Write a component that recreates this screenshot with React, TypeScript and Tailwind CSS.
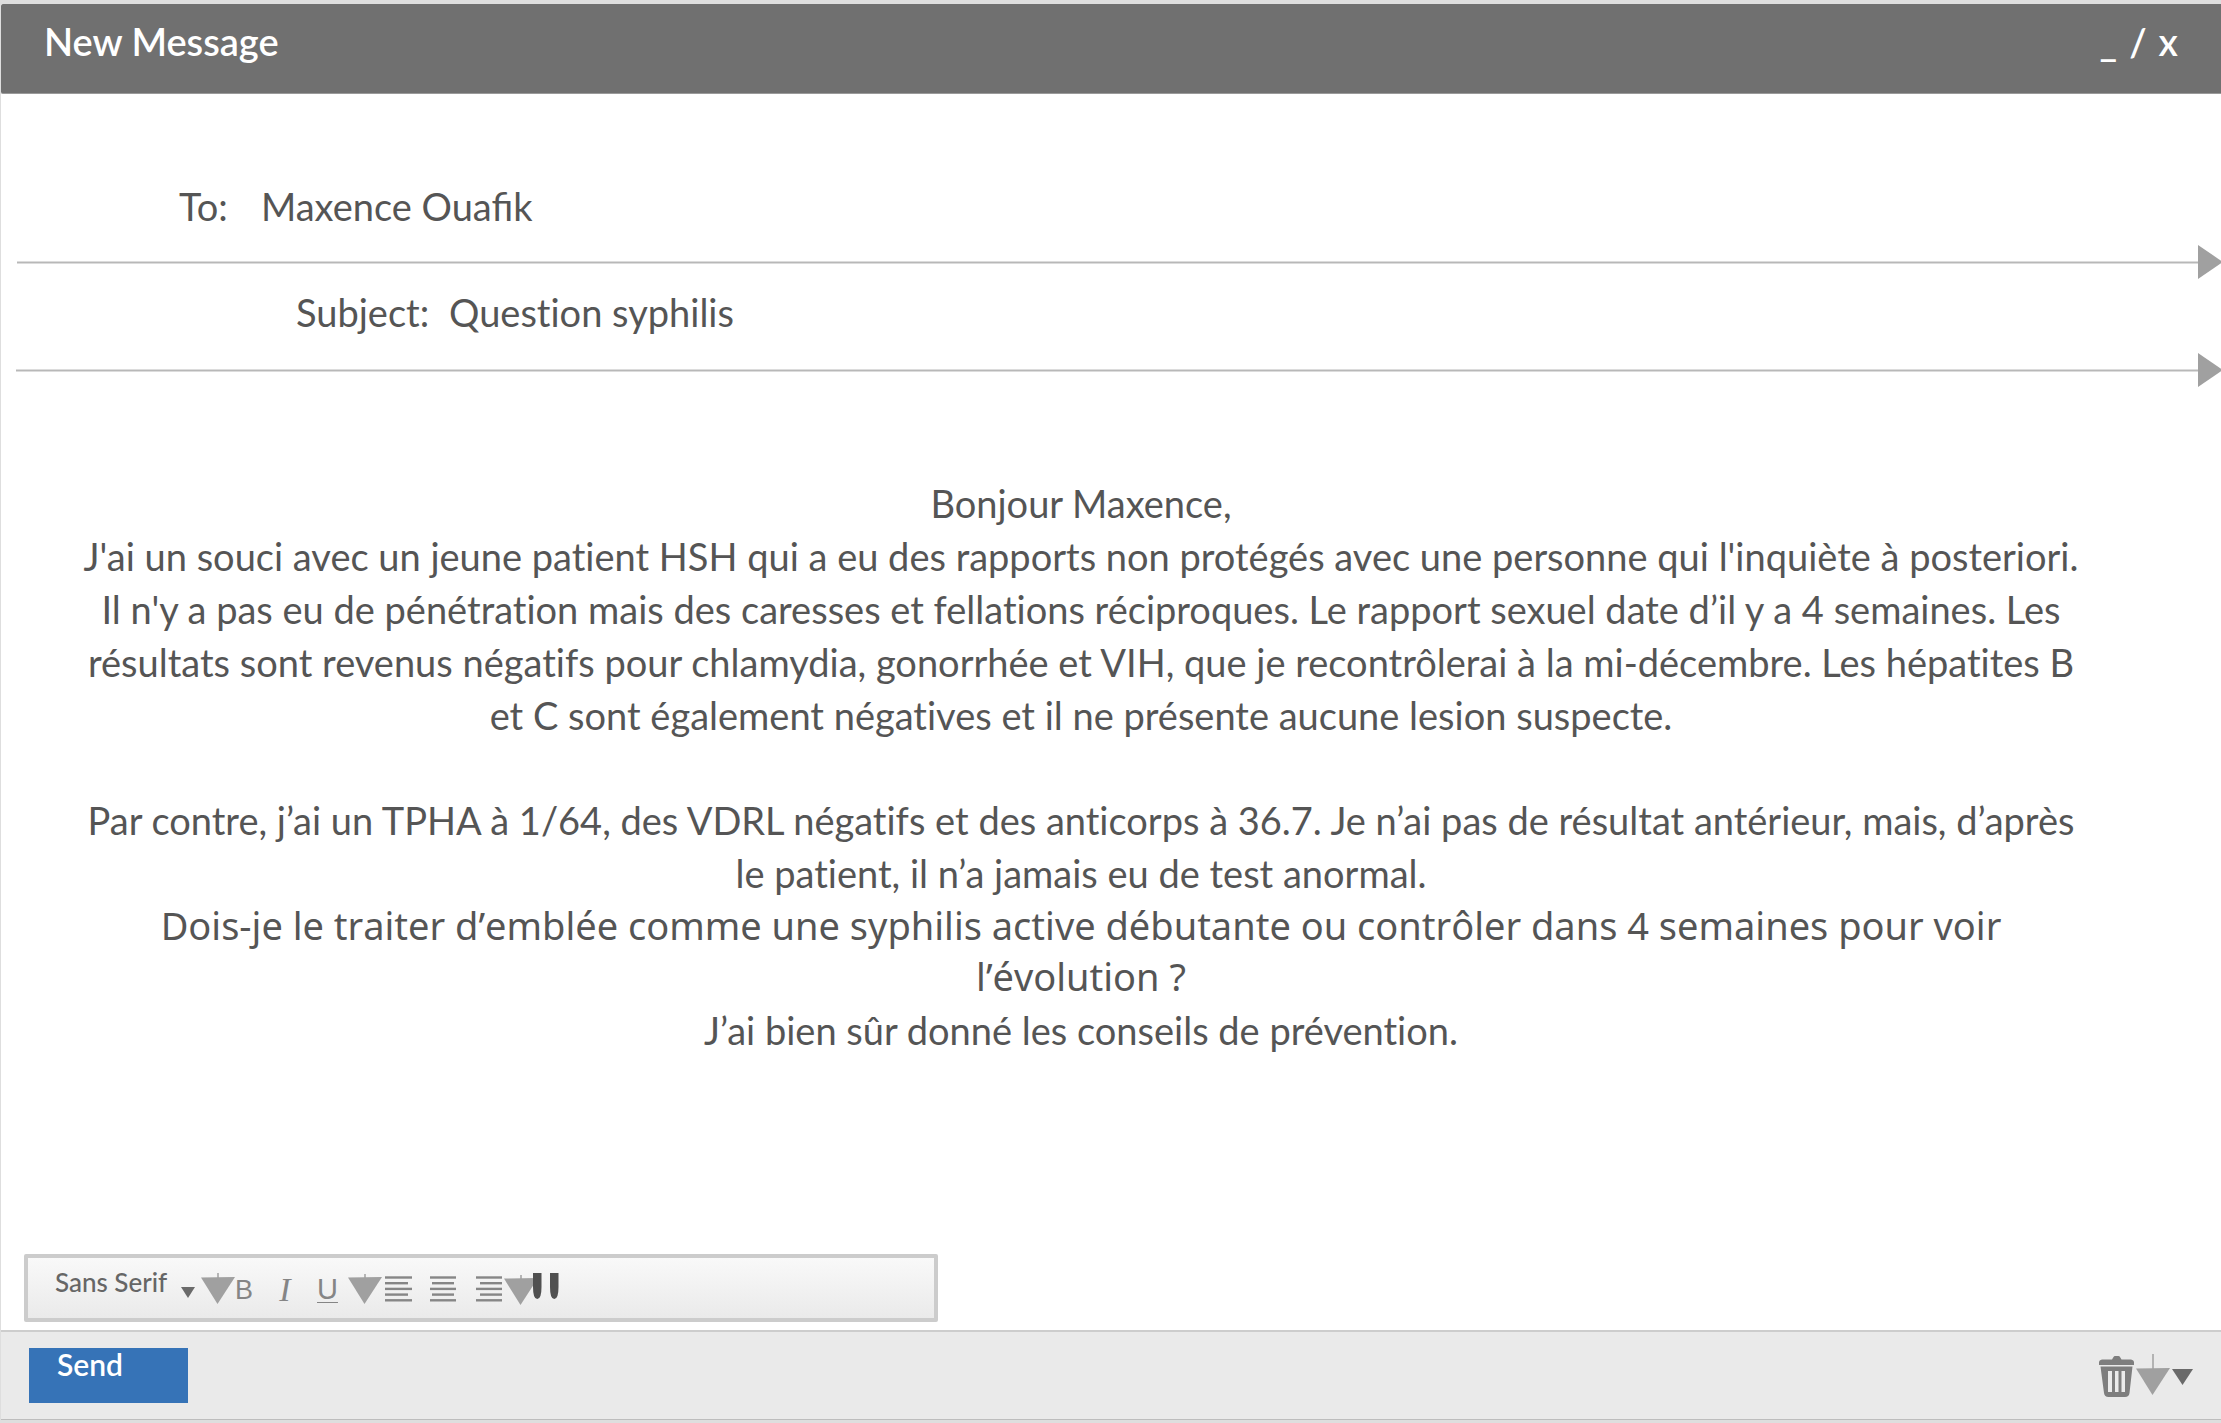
import type { ReactNode } from "react";

function DownArrow({ tick }: { tick: number }) {
  return (
    <svg width="34" height="42" viewBox="0 0 34 42" className="shrink-0" aria-hidden="true">
      <path d={`M17 ${14 - tick}V16`} stroke="#a0a0a0" strokeWidth="1.5" />
      <path d="M0 14.5L34 14L16.5 41Z" fill="#a0a0a0" />
    </svg>
  );
}

function Caret({ className }: { className: string }) {
  return (
    <svg viewBox="0 0 20 15" className={className} preserveAspectRatio="none" aria-hidden="true">
      <path d="M0 0H20L10 15Z" fill="#6a6a6a" />
    </svg>
  );
}

function AlignIcon({ rows }: { rows: number[][] }) {
  return (
    <svg width="27" height="26" viewBox="0 0 27 26" aria-hidden="true">
      {rows.map(([x1, x2], i) => (
        <path key={i} d={`M${x1} ${1.5 + i * 5.7}H${x2}`} stroke="#868686" strokeWidth="2.4" />
      ))}
    </svg>
  );
}

function TrashIcon() {
  return (
    <svg width="35" height="41" viewBox="0 0 35 41" aria-hidden="true">
      <path
        d="M0 9V6.500Q0 4 3 3.500H13L14.500 1Q15 0 16 0H19.500Q20.500 0 21 1L22.500 3.500H32Q35 4 35 6.500V9Z"
        fill="#7e7e7e"
      />
      <path d="M1.500 10.500H33.500L30.500 37Q30 41 26 41H9.500Q5.500 41 5 37Z" fill="#7e7e7e" />
      <path d="M9 15H13V36H9ZM16 15H19.500V36H16ZM22.500 15H26V36H22.500Z" fill="#ebebeb" />
    </svg>
  );
}

function Divider({ className }: { className: string }) {
  return (
    <div className={`flex h-[34px] items-center ${className}`}>
      <div className="h-[3px] flex-1 border-y border-[#dcdcdc] bg-[#b8b8b8]" />
      <svg width="23" height="34" viewBox="0 0 23 34" aria-hidden="true">
        <path d="M0 0L25 17L0 34Z" fill="#a0a0a0" />
      </svg>
    </div>
  );
}

function ToolButton({ label, className, children }: { label: string; className: string; children: ReactNode }) {
  return (
    <button type="button" aria-label={label} className={`flex shrink-0 items-center justify-center ${className}`}>
      {children}
    </button>
  );
}

export default function App() {
  return (
    <div className="flex min-h-screen flex-col border-t-4 border-b-3 border-l border-[#dedede] bg-white font-['Lato',sans-serif] text-[38px] text-[#555555]">
      <header className="flex h-[90px] items-start justify-between rounded-l-xs border-b border-[#9a9a9a] bg-[#707070] pt-[13px] pr-[43px] pl-[43px] leading-[48px] text-white">
        <h1 className="font-semibold">New Message</h1>
        <div className="flex gap-3 font-semibold">
          <button type="button" aria-label="Minimize">_</button>
          <button type="button" aria-label="Expand">/</button>
          <button type="button" aria-label="Close">x</button>
        </div>
      </header>

      <form className="flex flex-1 flex-col" onSubmit={(e) => e.preventDefault()}>
        <div className="mt-[86px] flex items-center pl-[178px] leading-[52px]">
          <label htmlFor="to" className="w-[82px]">To:</label>
          <input id="to" defaultValue="Maxence Ouafik" className="h-[52px] flex-1 bg-transparent outline-none" />
        </div>
        <Divider className="mt-[13px] ml-4" />
        <div className="mt-[7px] flex items-center pl-[295px] leading-[52px] [font-variant-ligatures:none]">
          <label htmlFor="subject" className="w-[153px]">Subject:</label>
          <input id="subject" defaultValue="Question syphilis" className="h-[52px] flex-1 bg-transparent outline-none [font-variant-ligatures:none]" />
        </div>
        <Divider className="mt-[15px] ml-[15px]" />

        <div
          role="textbox"
          aria-label="Message body"
          aria-multiline="true"
          className="mt-[90px] mr-[134px] ml-[74px] text-center leading-[53px] [font-variant-ligatures:none] [text-rendering:optimizeSpeed]"
        >
          <p>Bonjour Maxence,</p>
          <p>
            J'ai un souci avec un jeune patient HSH qui a eu des rapports non protégés avec une personne qui l'inquiète à
            posteriori. Il n'y a pas eu de pénétration mais des caresses et fellations réciproques. Le rapport sexuel
            date d’il y a 4 semaines. Les résultats sont revenus négatifs pour chlamydia, gonorrhée et VIH, que je
            recontrôlerai à la mi-décembre. Les hépatites B et C sont également négatives et il ne présente aucune lesion
            suspecte.
          </p>
          <p className="mt-[52px]">
            Par contre, j’ai un TPHA à 1/64, des VDRL négatifs et des anticorps à 36.7. Je n’ai pas de résultat
            antérieur, mais, d’après le patient, il n’a jamais eu de test anormal.
          </p>
          <p className="font-['Noto_Sans',sans-serif] leading-[51px] [font-kerning:none]">
            Dois-je le traiter d’emblée comme une syphilis active débutante ou contrôler dans 4 semaines pour voir
            <br />
            l’évolution ?
          </p>
          <p className="mt-[2px]">J’ai bien sûr donné les conseils de prévention.</p>
        </div>

        <div className="mt-auto mb-2 ml-[23px] flex h-[68px] w-[914px] items-center rounded-xs border-4 border-[#cccccc] bg-linear-to-b from-[#f9f9f9] to-[#eaeaea] text-[#858585]">
          <button type="button" className="ml-[27px] flex w-[140px] shrink-0 items-center justify-between text-[26px] leading-9 font-medium text-[#666666]">
            <span className="mb-3 whitespace-nowrap">Sans Serif</span>
            <Caret className="mt-2 h-[11px] w-[14px]" />
          </button>
          <div className="mb-[9px] ml-[6px] flex"><DownArrow tick={4} /></div>
          <ToolButton label="Bold" className="mt-1 w-[18px] font-['Liberation_Sans',sans-serif] text-[27px]">B</ToolButton>
          <ToolButton label="Italic" className="mt-[3px] ml-6 w-4 font-['Liberation_Serif',serif] text-[34px] italic">I</ToolButton>
          <ToolButton label="Underline" className="mt-[3px] ml-6 w-[21px] font-['Liberation_Sans',sans-serif] text-[29px] underline decoration-1 underline-offset-3">U</ToolButton>
          <div className="mb-[9px] ml-[10px] flex"><DownArrow tick={3} /></div>
          <ToolButton label="Align left" className="mt-[2px] ml-[3px]">
            <AlignIcon rows={[[0, 27], [0, 23], [0, 27], [0, 23], [0, 27]]} />
          </ToolButton>
          <ToolButton label="Align center" className="mt-[2px] ml-[18px]">
            <AlignIcon rows={[[0, 26], [2, 24], [0, 26], [2, 24], [0, 26]]} />
          </ToolButton>
          <ToolButton label="Align right" className="mt-[2px] ml-[19px]">
            <AlignIcon rows={[[0, 26], [4, 26], [0, 26], [4, 26], [0, 26]]} />
          </ToolButton>
          <div className="mb-[6px] ml-px flex"><DownArrow tick={3} /></div>
          <ToolButton label="Quote" className="mb-1 -ml-[5px]">
            <svg width="26" height="26" viewBox="0 0 26 26" aria-hidden="true">
              <path d="M0 0H8.500V14Q8.500 26 4.250 26Q0 26 0 14ZM17 0H25.500V14Q25.500 26 21.250 26Q17 26 17 14Z" fill="#505050" />
            </svg>
          </ToolButton>
        </div>

        <footer className="flex h-[90px] items-center border-t-2 border-b border-t-[#cdcdcd] border-b-[#bdbdbd] bg-[#eaeaea] pr-7 pl-7">
          <button type="submit" className="flex h-[55px] w-[159px] items-start bg-[#3673b7] pl-7 text-[30px] leading-8 font-semibold text-white">
            Send
          </button>
          <div className="ml-auto flex items-center">
            <button type="button" aria-label="Discard draft" className="mt-[2px]"><TrashIcon /></button>
            <div className="mb-px ml-[2px] flex"><DownArrow tick={14} /></div>
            <button type="button" aria-label="More options" className="mt-[2px] ml-[2px]">
              <Caret className="h-4 w-[21px]" />
            </button>
          </div>
        </footer>
      </form>
    </div>
  );
}
